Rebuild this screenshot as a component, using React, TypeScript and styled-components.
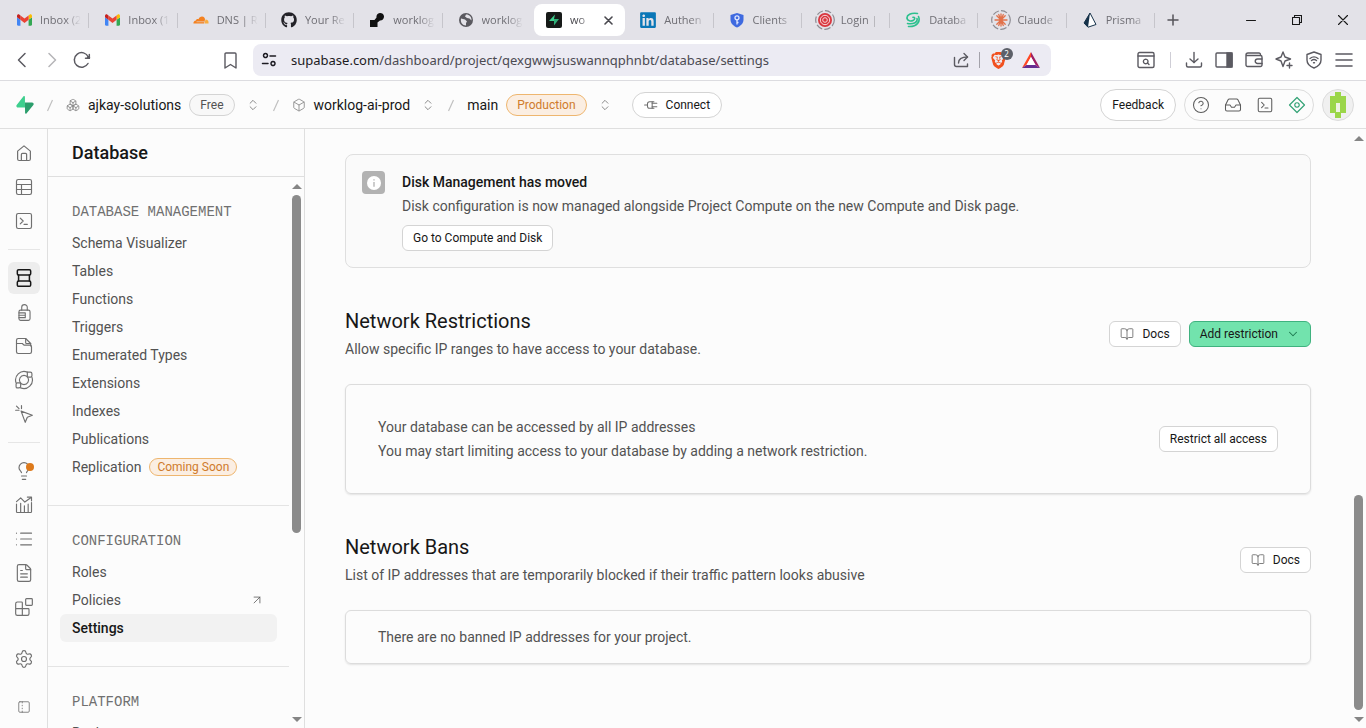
import React from "react";
import styled, { createGlobalStyle, css } from "styled-components";
import {
  ArrowUpRight,
  Blocks,
  BookOpen,
  Box,
  Boxes,
  ChevronDown,
  ChevronsUpDown,
  FileText,
  Inbox,
  Lightbulb,
  List,
  PanelLeftDashed,
  Settings,
  CircleHelp,
} from "lucide-react";
import { FaGithub, FaLinkedin } from "react-icons/fa";
import { SiBrave } from "react-icons/si";

const GlobalStyle = createGlobalStyle`
  *, *::before, *::after { box-sizing: border-box; }
  body {
    margin: 0;
    background: #fcfcfc;
    color: #171717;
    font-family: Roboto, "Liberation Sans", sans-serif;
    font-size: 14px;
    line-height: 24px;
  }
  h1, h2, h3, p, ul { margin: 0; padding: 0; }
  ul { list-style: none; }
  a { color: inherit; text-decoration: none; }
  button { font: inherit; color: inherit; padding: 0; border: 0; background: none; cursor: pointer; }
  svg { display: block; flex: none; }
`;

const Shell = styled.div`
  display: flex;
  flex-direction: column;
  height: 100vh;
  overflow: hidden;
`;

/* ---------- Browser window ---------- */

const TabStrip = styled.div`
  display: flex;
  flex: none;
  align-items: center;
  height: 40px;
  background: #e3e2e8;
  font-family: "Open Sans", sans-serif;
  font-size: 11px;
  line-height: 16px;
`;

const TabList = styled.div`
  display: flex;
  flex: 0 1 1155px;
  min-width: 0;
  padding-left: 1px;
`;

const Tab = styled.button<{ $active?: boolean; $divider?: boolean }>`
  position: relative;
  display: flex;
  flex: 1 1 0;
  min-width: 0;
  align-items: center;
  gap: 8px;
  height: 32px;
  padding: 0 6px 0 15px;
  color: #6f6e74;
  text-align: left;
  ${(p) =>
    p.$divider &&
    css`
      &::after {
        content: "";
        position: absolute;
        right: 0;
        top: 9px;
        width: 1px;
        height: 15px;
        background: #c6c5cb;
      }
    `}
  ${(p) =>
    p.$active &&
    css`
      margin-left: 3px;
      padding: 0 12px;
      border-radius: 8px;
      background: #fff;
      color: #4a494f;
    `}
`;

const TabIcon = styled.span`
  display: flex;
  flex: none;
  align-items: center;
  justify-content: center;
  width: 16px;
  height: 16px;
`;

const TabLabel = styled.span`
  flex: 1;
  min-width: 0;
  overflow: hidden;
  white-space: nowrap;
  mask-image: linear-gradient(to right, #000 calc(100% - 18px), transparent calc(100% - 2px));
`;

const NewTab = styled.button`
  display: grid;
  place-items: center;
  width: 36px;
  height: 32px;
  color: #55545a;
`;

const WindowButtons = styled.div`
  display: flex;
  margin-left: auto;
`;

const WindowButton = styled.button`
  display: grid;
  place-items: center;
  width: 46px;
  height: 40px;
`;

const Toolbar = styled.div`
  display: flex;
  flex: none;
  align-items: center;
  height: 41px;
  padding: 0 7px;
  border-bottom: 1px solid #dcdce0;
  background: #fff;
  color: #5b5a61;
`;

const ToolButton = styled.button<{ $dim?: boolean }>`
  display: grid;
  place-items: center;
  width: 30px;
  height: 30px;
  opacity: ${(p) => (p.$dim ? 0.45 : 1)};
`;

const ToolDivider = styled.span`
  width: 1px;
  height: 16px;
  margin: 0 8px 0 9px;
  background: #cfced6;
`;

const Address = styled.label`
  display: flex;
  flex: 1;
  align-items: center;
  min-width: 0;
  height: 32px;
  margin: 0 80px 0 8px;
  padding: 0 5px 0 8px;
  border-radius: 8px;
  background: #ecebf3;
  color: #1c1b22;
  font-family: "Noto Sans", sans-serif;
  font-size: 13px;
`;

const Origin = styled.span`
  margin-left: 14px;
`;

const Path = styled.input`
  flex: 1;
  min-width: 0;
  padding: 0;
  border: 0;
  outline: 0;
  background: none;
  color: #4b4a52;
  font: inherit;
`;

const History = styled.div`
  display: flex;
  width: 208px;
`;

const AddressIcons = styled.div`
  display: flex;
  align-items: center;
  gap: 3px;
  color: #5b5a61;
  ${ToolDivider} { margin: 0; background: #a3a2aa; }
`;

const Shield = styled.span`
  position: relative;
  color: #f1501f;
`;

const Count = styled.span`
  position: absolute;
  top: -4px;
  right: -6px;
  width: 12px;
  height: 12px;
  border-radius: 6px;
  background: #5d6069;
  color: #fff;
  font-size: 8px;
  line-height: 12px;
  text-align: center;
`;

/* ---------- Dashboard header ---------- */

const Header = styled.header`
  display: flex;
  flex: none;
  align-items: center;
  gap: 20px;
  height: 48px;
  padding: 0 12px 0 16px;
  border-bottom: 1px solid #dfdfdf;
`;

const Crumbs = styled.nav`
  display: flex;
  align-items: center;
`;

const Crumb = styled.a`
  display: flex;
  align-items: center;
  gap: 8px;
  white-space: nowrap;
  svg { color: #8a8a8a; }
`;

const Slash = styled.svg`
  width: 16px;
  height: 16px;
  margin: 0 8px;
  color: #c0c0c0;
`;

const Switcher = styled.button`
  display: grid;
  place-items: center;
  width: 14px;
  height: 24px;
  margin-left: 11px;
  color: #7a7a7a;
`;

const Pill = styled.span<{ $tone?: "warning"; $small?: boolean }>`
  padding: 0 ${(p) => (p.$small ? 7 : 10)}px;
  border: 1px solid ${(p) => (p.$tone ? "#eeb66f" : "#d4d4d4")};
  border-radius: 11px;
  background: ${(p) => (p.$tone ? "#fbeee2" : "#f8f8f8")};
  color: ${(p) => (p.$tone ? "#cf7b2c" : "#525252")};
  font-size: 12px;
  line-height: ${(p) => (p.$small ? 16 : 20)}px;
`;

const Button = styled.button<{ $tone?: "primary"; $round?: boolean; $tall?: boolean }>`
  display: inline-flex;
  flex: none;
  align-items: center;
  gap: 8px;
  height: ${(p) => (p.$tall ? 32 : 26)}px;
  padding: 0 ${(p) => (p.$round ? 11 : 10)}px;
  border: 1px solid ${(p) => (p.$tone ? "#3fb27f" : "#d4d4d4")};
  border-radius: ${(p) => (p.$round ? 16 : 6)}px;
  background: ${(p) => (p.$tone ? "#72e3ad" : "#fff")};
  color: #171717;
  font-size: 12px;
  line-height: 16px;
  white-space: nowrap;
  svg { color: ${(p) => (p.$tone ? "#1d7a50" : "#6f6f6f")}; }
`;

const HeaderActions = styled.div`
  display: flex;
  gap: 8px;
  margin-left: auto;
`;

const IconGroup = styled.div`
  display: flex;
  align-items: center;
  height: 32px;
  border: 1px solid #dcdcdc;
  border-radius: 16px;
`;

const IconButton = styled.button<{ $green?: boolean }>`
  display: grid;
  place-items: center;
  width: 32px;
  height: 30px;
  color: ${(p) => (p.$green ? "#35a377" : "#5c5c5c")};
`;

const Avatar = styled.button`
  display: grid;
  place-items: center;
  width: 32px;
  height: 32px;
  border: 1px solid #dcdcdc;
  border-radius: 16px;
  background: #f0f0f0;
`;

/* ---------- Body ---------- */

const Body = styled.div`
  display: flex;
  flex: 1;
  min-height: 0;
`;

const Rail = styled.nav`
  display: flex;
  flex: none;
  flex-direction: column;
  width: 48px;
  padding: 8px 7px 5px 8px;
  border-right: 1px solid #dfdfdf;
`;

const RailGroup = styled.div`
  display: flex;
  flex-direction: column;
  gap: 2px;
  & + & {
    margin-top: 12px;
    padding-top: 12px;
    border-top: 1px solid #e6e6e6;
  }
`;

const RailLink = styled.a<{ $active?: boolean }>`
  position: relative;
  display: grid;
  place-items: center;
  width: 32px;
  height: 32px;
  border-radius: 6px;
  background: ${(p) => (p.$active ? "#ededed" : "none")};
  color: ${(p) => (p.$active ? "#171717" : "#707070")};
`;

const RailFoot = styled.div`
  display: flex;
  flex-direction: column;
  gap: 16px;
  margin-top: 20px;
`;

const Dot = styled.span`
  position: absolute;
  top: 8px;
  right: 6px;
  width: 8px;
  height: 8px;
  border-radius: 4px;
  background: #dd7a1c;
`;

const Sidebar = styled.aside`
  display: flex;
  flex: none;
  flex-direction: column;
  width: 257px;
  border-right: 1px solid #dfdfdf;
`;

const SidebarTitle = styled.h1`
  flex: none;
  height: 48px;
  padding-left: 24px;
  border-bottom: 1px solid #dfdfdf;
  font-size: 18px;
  font-weight: 500;
  line-height: 48px;
`;

const SidebarScroll = styled.div`
  display: flex;
  flex: 1;
  min-height: 0;
`;

const SidebarNav = styled.nav`
  flex: 1;
  min-width: 0;
  overflow: hidden;
`;

const NavGroup = styled.section`
  padding: 25px 12px 24px;
  border-bottom: 1px solid #e4e4e4;
`;

const NavHeading = styled.h2`
  margin-bottom: 7px;
  padding-left: 12px;
  color: #707070;
  font-family: "Liberation Mono", monospace;
  font-size: 14px;
  font-weight: 400;
  line-height: 20px;
  text-transform: uppercase;
`;

const NavLink = styled.a<{ $active?: boolean }>`
  display: flex;
  align-items: center;
  gap: 8px;
  height: 28px;
  padding: 0 13px 0 12px;
  border-radius: 6px;
  background: ${(p) => (p.$active ? "#f2f2f2" : "none")};
  color: ${(p) => (p.$active ? "#171717" : "#525252")};
  font-weight: ${(p) => (p.$active ? 500 : 400)};
  svg { margin-left: auto; }
`;

const Scrollbar = styled.div`
  display: flex;
  flex: none;
  flex-direction: column;
  align-items: center;
  width: 15px;
`;

const ScrollArrow = styled.span<{ $down?: boolean }>`
  display: grid;
  place-items: center;
  height: 18px;
  &::before {
    content: "";
    border: 5px solid transparent;
    border-${(p) => (p.$down ? "top" : "bottom")}-color: #858585;
    border-${(p) => (p.$down ? "bottom" : "top")}-width: 0;
  }
`;

const ScrollSpace = styled.span<{ $share: number }>`
  flex: ${(p) => p.$share} 1 0;
`;

const ScrollThumb = styled.span<{ $share: number }>`
  flex: ${(p) => p.$share} 1 0;
  width: 9px;
  border-radius: 5px;
  background: #8b8b8b;
`;

const Main = styled.main`
  flex: 1;
  min-width: 0;
  padding: 25px 40px;
  overflow: hidden;
`;

const Notice = styled.section`
  display: flex;
  gap: 17px;
  padding: 16px;
  border: 1px solid #dfdfdf;
  border-radius: 8px;
  background: #fafafa;
`;

const NoticeIcon = styled.span`
  display: grid;
  place-items: center;
  flex: none;
  width: 23px;
  height: 23px;
  border-radius: 4px;
  background: #b2b2b2;
`;

const NoticeTitle = styled.h3`
  font-size: 14px;
  font-weight: 500;
  line-height: 23px;
`;

const Text = styled.p`
  color: #525252;
`;

const NoticeBody = styled.div`
  ${Button} { margin-top: 7px; }
`;

const Section = styled.section`
  margin-top: 40px;
`;

const SectionHead = styled.div`
  display: flex;
  align-items: center;
  gap: 8px;
  margin-bottom: 24px;
`;

const SectionIntro = styled.div`
  display: flex;
  flex: 1;
  flex-direction: column;
  gap: 4px;
  ${Text} { line-height: 22px; }
`;

const SectionTitle = styled.h2`
  font-size: 20px;
  font-weight: 400;
  line-height: 26px;
`;

const Card = styled.div<{ $roomy?: boolean }>`
  display: flex;
  align-items: center;
  justify-content: space-between;
  padding: ${(p) => (p.$roomy ? 30 : 14)}px 32px;
  border: 1px solid #dcdcdc;
  border-radius: 6px;
  box-shadow: 0 1px 2px rgba(0, 0, 0, 0.1);
`;

/* ---------- Drawings ---------- */

type LineProps = { d: string[]; size?: number; width?: number; box?: number };

const Line = ({ d, size = 18, width = 1.4, box = 24 }: LineProps) => (
  <svg
    width={size}
    height={size}
    viewBox={`0 0 ${box} ${box}`}
    fill="none"
    stroke="currentColor"
    strokeWidth={width}
    strokeLinecap="round"
    strokeLinejoin="round"
    aria-hidden
  >
    {d.map((path) => (
      <path key={path} d={path} />
    ))}
  </svg>
);

const icons = {
  home: ["M3.5 9.5 L12 2.5 L20.5 9.5 V20 a2 2 0 0 1-2 2 H5.500 a2 2 0 0 1-2-2 Z", "M8.500 22 V14 a1.500 1.500 0 0 1 1.500-1.500 H14 A1.500 1.500 0 0 1 15.500 14 V22"],
  table: ["M3 5 a2 2 0 0 1 2-2 H19 a2 2 0 0 1 2 2 V19 a2 2 0 0 1-2 2 H5 a2 2 0 0 1-2-2 Z", "M3 9 H21", "M3 15 H21", "M9 9 V21"],
  sql: ["M3 5 a2 2 0 0 1 2-2 H19 a2 2 0 0 1 2 2 V19 a2 2 0 0 1-2 2 H5 a2 2 0 0 1-2-2 Z", "M7.500 8.500 L11 12 L7.500 15.500", "M12 16 H16"],
  database: ["M4 3.500 a1.500 1.500 0 0 1 1.500-1.500 H18.500 A1.500 1.500 0 0 1 20 3.500 V7 A1.500 1.500 0 0 1 18.500 8.500 H5.500 A1.500 1.500 0 0 1 4 7 Z", "M5.500 8.500 V15.500 M18.500 8.500 V15.500", "M4 17 a1.500 1.500 0 0 1 1.500-1.500 H18.500 A1.500 1.500 0 0 1 20 17 V20.500 A1.500 1.500 0 0 1 18.500 22 H5.500 A1.500 1.500 0 0 1 4 20.500 Z"],
  auth: ["M5 11 a2 2 0 0 1 2-2 H17 a2 2 0 0 1 2 2 V20 a2 2 0 0 1-2 2 H7 a2 2 0 0 1-2-2 Z", "M8.500 9 V5.500 a3.500 3.500 0 0 1 7 0 V9", "M5 12.500 H13 M5 15.500 H13 M5 18.500 H13 V12.500"],
  storage: ["M3 9 V5 a2 2 0 0 1 2-2 H14 L20 9 V12", "M14 3 V8 a1 1 0 0 0 1 1 H20", "M3 9 V19 a2 2 0 0 0 2 2 H19 a2 2 0 0 0 2-2 V13 a2 2 0 0 0-2-2 H12 L10 9 Z"],
  functions: ["M16 2.500 A10.300 10.300 0 0 0 2.500 15.500 M21.500 8.500 A10.300 10.300 0 0 1 8 21.500", "M12 6.500 a5.500 5.500 0 1 0 0.010 0 Z", "M16 2.500 H19.500 a2 2 0 0 1 2 2 V7 A1.500 1.500 0 0 1 20 8.500 H17.500 A1.500 1.500 0 0 1 16 7 Z", "M2.500 17 A1.500 1.500 0 0 1 4 15.500 H6.500 A1.500 1.500 0 0 1 8 17 V19.500 A2 2 0 0 1 6 21.500 H4 A1.500 1.500 0 0 1 2.500 20 Z"],
  realtime: ["M8.500 8.500 L22 13.500 L16 16 L13.500 22 Z", "M9 2 V5.500", "M2 7.500 H6", "M3 2.500 L6 5.500"],
  reports: ["M3 11 V20 a1 1 0 0 0 1 1 H20 a1 1 0 0 0 1-1 V9", "M3 8 L8 3.500 L13 8.500 L20.500 3", "M16 2.500 H21 V7", "M8 10 V21 M12.500 13 V21 M17 11 V21"],
  plug: ["M1 12 H6", "M14 6.500 H9.500 A3.500 3.500 0 0 0 6 10 V14 A3.500 3.500 0 0 0 9.500 17.500 H14 Z", "M14 9 H22 M14 15 H22 M14 6.500 H17 M14 17.500 H17"],
  diamond: ["M12 2 L22 12 L12 22 L2 12 Z", "M12 9 a3 3 0 1 0 0.010 0 Z"],
};

const Bolt = ({ size }: { size: number }) => (
  <svg width={size} height={size} viewBox="0 0 109 113" aria-hidden>
    <path fill="#2b9e6c" d="M63.700 110.300c-2.900 3.600-8.700 1.600-8.700-3L54 40.100h45.200c8.200 0 12.800 9.400 7.700 15.800L63.700 110.300Z" />
    <path fill="#3ecf8e" d="M45.300 2.100c2.900-3.600 8.700-1.700 8.700 2.900l.5 67.300H9.800c-8.200 0-12.700-9.500-7.600-15.900L45.300 2.100Z" />
  </svg>
);

const Gmail = () => (
  <svg width="15" height="12" viewBox="52 42 88 66" aria-hidden>
    <path fill="#4285f4" d="M58 108h14V74L52 59v43c0 3.320 2.690 6 6 6" />
    <path fill="#34a853" d="M120 108h14c3.320 0 6-2.690 6-6V59l-20 15" />
    <path fill="#fbbc04" d="M120 48v26l20-15v-8c0-7.420-8.470-11.650-14.400-7.200" />
    <path fill="#ea4335" d="M72 74V48l24 18 24-18v26L96 92" />
    <path fill="#c5221f" d="M52 51v8l20 15V48l-5.600-4.200c-5.940-4.450-14.400-.22-14.400 7.200" />
  </svg>
);

const Cloudflare = () => (
  <svg width="16" height="8" viewBox="0 0 32 16" aria-hidden>
    <path fill="#f48120" d="M1 15 a5 5 0 0 1 5-6 C6 6 9 5 11 6.500 C12 2.500 15 1 18 1 C22 1 24 4 24 7 L22 15 Z" />
    <path fill="#faad3f" d="M23 15 L25 7 C29 7 32 10 31 15 Z" />
    <path stroke="#e3e2e8" strokeWidth="1.200" d="M7 11.500 H22" />
  </svg>
);

const NodeLogo = () => (
  <svg width="16" height="16" viewBox="0 0 16 16" aria-hidden>
    <path d="M1 8 H5.500 L7.500 5.500 A3.800 3.800 0 1 1 11 8.500 L8.500 10.500 V15 H1 Z" fill="#111" />
  </svg>
);

const Globe = () => (
  <svg width="16" height="16" viewBox="0 0 16 16" aria-hidden>
    <circle cx="8" cy="8" r="7" fill="#5a595f" />
    <path fill="#e3e2e8" d="M3 6.500 L7 7.500 L9 9.500 L8 11 V13.500 C4.500 13.500 2.200 10.500 3 6.500 Z M8 2.500 L7 4.500 L9 6 L11.500 6.500 L13.500 8.500 C13.800 5 11.500 2.500 8 2.500 Z" />
  </svg>
);

const BoltTile = () => (
  <svg width="16" height="16" viewBox="0 0 16 16" aria-hidden>
    <rect width="16" height="16" rx="2" fill="#161a18" />
    <path d="M9 2.500 L3 9 H8 V7 Z" fill="#3ecf8e" />
    <path d="M8 13.500 L13 7 H8 Z" fill="#2fae78" />
  </svg>
);

const KeyShield = () => (
  <svg width="14" height="16" viewBox="0 0 14 16" aria-hidden>
    <path d="M7 1 L13.500 3 V7.500 C13.500 11.500 10.500 14 7 15.500 C3.500 14 .5 11.500 .5 7.500 V3 Z" fill="#3f6ae0" />
    <circle cx="7" cy="5.800" r="2" fill="none" stroke="#dfe7ff" strokeWidth="1.300" />
    <path d="M7 8 V12.500 M7 10.500 H8.500" stroke="#dfe7ff" strokeWidth="1.300" />
  </svg>
);

const Ring = ({ children }: { children: React.ReactNode }) => (
  <svg width="20" height="20" viewBox="0 0 20 20" fill="none" aria-hidden>
    <circle cx="10" cy="10" r="9.300" stroke="#8d8c92" strokeWidth="1.200" strokeDasharray="6.500 2.200" />
    {children}
  </svg>
);

const Target = () => (
  <Ring>
    <circle cx="10" cy="10" r="7" fill="#d9363e" />
    <circle cx="10" cy="10" r="4.700" stroke="#f7d6d8" />
    <circle cx="10" cy="10" r="2.300" stroke="#f7d6d8" />
  </Ring>
);

const Claude = () => (
  <Ring>
    <path
      stroke="#e2714a"
      strokeWidth="1.300"
      strokeLinecap="round"
      d="M10 4 V16 M4 10 H16 M5.800 5.800 L14.200 14.200 M14.200 5.800 L5.800 14.200 M7.700 4.500 L12.300 15.500 M12.300 4.500 L7.700 15.500"
    />
  </Ring>
);

const Swirl = () => (
  <svg width="16" height="16" viewBox="0 0 16 16" fill="none" stroke="#2cc08e" strokeWidth="1.600" strokeLinecap="round" aria-hidden>
    <path d="M12.500 1.500 C6 .5 1.500 3 2 6.500 C2.500 9 6 9.500 8 8.500 C10.500 7.300 10 5 8 5.300" />
    <path d="M13.500 4.500 C15.500 9 12.500 15 3.500 14.500 M12 6.500 C13 10 9 12.500 2.500 11.500" />
  </svg>
);

const Prisma = () => (
  <svg width="14" height="16" viewBox="0 0 14 16" aria-hidden>
    <path d="M7 1 L13 12.500 L5 15.200 L1 11 Z" fill="#fff" stroke="#16324a" strokeWidth="1" />
    <path d="M7 1 L5 15.200 L1 11 Z" fill="#16324a" />
  </svg>
);

const Bat = () => (
  <svg width="18" height="16" viewBox="0 0 18 16" aria-hidden>
    <path fill="#ff4724" d="M9 0 L0 16 L4.500 13 L9 5 Z" />
    <path fill="#662d91" d="M0 16 H18 L13.500 13 H4.500 Z" />
    <path fill="#9e1f63" d="M9 0 L18 16 L13.500 13 L9 5 Z" />
    <path fill="#fff" d="M9 5 L13.500 13 H4.500 Z" />
  </svg>
);

const PixelAvatar = () => (
  <svg width="16" height="28" viewBox="0 0 16 28" aria-hidden>
    <path fill="#9bd649" d="M5 1 H11 V5 H16 V22 H11 V27 H5 V22 H0 V5 H5 Z" />
    <path fill="#eef3e4" d="M6 12 H10 V21 H6 Z" />
  </svg>
);

const Info = () => (
  <svg width="14" height="14" viewBox="0 0 14 14" aria-hidden>
    <circle cx="7" cy="7" r="7" fill="#fff" />
    <path d="M7 3.200 V4.500 M7 6 V10.800" stroke="#b2b2b2" strokeWidth="1.300" />
  </svg>
);

/* ---------- Content ---------- */

const tabs = [
  { label: "Inbox (2", icon: <Gmail />, divider: true },
  { label: "Inbox (1", icon: <Gmail />, divider: true },
  { label: "DNS | R", icon: <Cloudflare />, divider: true },
  { label: "Your Re", icon: <FaGithub size={16} color="#232228" />, divider: true },
  { label: "worklog", icon: <NodeLogo />, divider: true },
  { label: "worklog", icon: <Globe /> },
  { label: "wo", icon: <BoltTile />, active: true },
  { label: "Authen", icon: <FaLinkedin size={18} color="#0a77b7" />, divider: true },
  { label: "Clients", icon: <KeyShield />, divider: true },
  { label: "Login |", icon: <Target />, divider: true },
  { label: "Databa", icon: <Swirl />, divider: true },
  { label: "Claude", icon: <Claude />, divider: true },
  { label: "Prisma", icon: <Prisma />, divider: true },
];

type Entry = { label: string; badge?: string; external?: boolean; active?: boolean };

const groups: { heading: string; items: Entry[] }[] = [
  {
    heading: "Database Management",
    items: [
      { label: "Schema Visualizer" },
      { label: "Tables" },
      { label: "Functions" },
      { label: "Triggers" },
      { label: "Enumerated Types" },
      { label: "Extensions" },
      { label: "Indexes" },
      { label: "Publications" },
      { label: "Replication", badge: "Coming Soon" },
    ],
  },
  {
    heading: "Configuration",
    items: [{ label: "Roles" }, { label: "Policies", external: true }, { label: "Settings", active: true }],
  },
  { heading: "Platform", items: [{ label: "Backups" }] },
];

type RailEntry = { label: string; icon: React.ReactNode; active?: boolean; dot?: boolean };

const railGroups: RailEntry[][] = [
  [
    { label: "Project overview", icon: <Line d={icons.home} width={1.6} /> },
    { label: "Table Editor", icon: <Line d={icons.table} size={20} /> },
    { label: "SQL Editor", icon: <Line d={icons.sql} size={20} /> },
  ],
  [
    { label: "Database", icon: <Line d={icons.database} width={1.8} size={20} />, active: true },
    { label: "Authentication", icon: <Line d={icons.auth} size={19} /> },
    { label: "Storage", icon: <Line d={icons.storage} size={20} /> },
    { label: "Edge Functions", icon: <Line d={icons.functions} size={20} /> },
    { label: "Realtime", icon: <Line d={icons.realtime} size={20} /> },
  ],
  [
    { label: "Advisors", icon: <Lightbulb size={20} strokeWidth={1.4} />, dot: true },
    { label: "Reports", icon: <Line d={icons.reports} size={20} /> },
    { label: "Logs", icon: <List size={20} strokeWidth={1.4} /> },
    { label: "API Docs", icon: <FileText size={20} strokeWidth={1.4} /> },
    { label: "Integrations", icon: <Blocks size={20} strokeWidth={1.4} /> },
  ],
];

const Browser = () => (
  <>
    <TabStrip>
      <TabList role="tablist" aria-label="Open tabs">
        {tabs.map((tab, i) => (
          <Tab key={i} role="tab" aria-selected={!!tab.active} $active={tab.active} $divider={tab.divider}>
            <TabIcon>{tab.icon}</TabIcon>
            <TabLabel>{tab.label}</TabLabel>
            {tab.active && <Line d={["M1 1 L8 8 M8 1 L1 8"]} size={9} box={9} width={1.6} />}
          </Tab>
        ))}
      </TabList>
      <NewTab aria-label="New tab">
        <Line d={["M6 1 V11 M1 6 H11"]} size={12} box={12} width={1.5} />
      </NewTab>
      <WindowButtons>
        <WindowButton aria-label="Minimize">
          <Line d={["M.5 5.500 H9.500"]} size={10} box={10} width={1} />
        </WindowButton>
        <WindowButton aria-label="Restore">
          <Line d={["M.5 2.500 H7.500 V9.500 H.5 Z", "M2.500 2.500 V.5 H9.500 V7.500 H7.500"]} size={10} box={10} width={1.1} />
        </WindowButton>
        <WindowButton aria-label="Close">
          <Line d={["M.5 .5 L9.500 9.500 M9.500 .5 L.5 9.500"]} size={10} box={10} width={1.1} />
        </WindowButton>
      </WindowButtons>
    </TabStrip>
    <Toolbar>
      <History>
        <ToolButton aria-label="Back"><Line d={["M11 1.500 L4.500 8 L11 14.500"]} size={16} box={16} width={1.5} /></ToolButton>
        <ToolButton aria-label="Forward" $dim><Line d={["M5 1.500 L11.500 8 L5 14.500"]} size={16} box={16} width={1.5} /></ToolButton>
        <ToolButton aria-label="Reload">
          <svg width="18" height="18" viewBox="0 0 18 18" fill="none" stroke="currentColor" strokeWidth="1.500" strokeLinecap="round">
            <path d="M15 12.500 A7.300 7.300 0 1 1 15.300 6" />
            <circle cx="15.500" cy="6.500" r="1.600" fill="currentColor" stroke="none" />
            <path d="M12.500 7.300 H16.300 V3.500" />
          </svg>
        </ToolButton>
      </History>
      <ToolButton aria-label="Bookmark">
        <Line d={["M3 2 a1 1 0 0 1 1-1 H13 a1 1 0 0 1 1 1 V16 L8.500 12.500 L3 16 Z"]} size={17} box={17} width={1.4} />
      </ToolButton>
      <Address>
        <Line d={["M6.500 3.500 A2 2 0 1 1 6.500 3.490", "M9 4 H14.500", "M1.500 11.500 H7", "M14 11.500 A2 2 0 1 1 14 11.490"]} size={16} box={16} width={1.5} />
        <Origin>supabase.com</Origin>
        <Path aria-label="Address" defaultValue="/dashboard/project/qexgwwjsuswannqphnbt/database/settings" />
        <AddressIcons>
          <ToolButton aria-label="Share">
            <Line d={["M1.500 5.500 V12.500 a2 2 0 0 0 2 2 H14.500 V12", "M5.500 11 C5.500 7 8 5 14.500 5", "M11 1.500 L14.500 5 L11 8.500"]} size={16} box={16} width={1.4} />
          </ToolButton>
          <ToolDivider />
          <ToolButton aria-label="Shields">
            <Shield><SiBrave size={17} /><Count>2</Count></Shield>
          </ToolButton>
          <ToolButton aria-label="Rewards"><Bat /></ToolButton>
        </AddressIcons>
      </Address>
      <ToolButton aria-label="Search tabs">
        <Line d={["M1 3 a1.500 1.500 0 0 1 1.500-1.500 H15.500 A1.500 1.500 0 0 1 17 3 V15 a1.500 1.500 0 0 1-1.500 1.500 H2.500 A1.500 1.500 0 0 1 1 15 Z", "M1 5 H17", "M11 10.500 A2.300 2.300 0 1 1 11 10.490", "M10.500 12 L12 13.500"]} size={18} box={18} width={1.4} />
      </ToolButton>
      <ToolDivider />
      <ToolButton aria-label="Downloads">
        <Line d={["M9 1.500 V11.500", "M5 8 L9 11.500 L13 8", "M1.500 12 V14.500 a1.500 1.500 0 0 0 1.500 1.500 H15 a1.500 1.500 0 0 0 1.500-1.500 V12"]} size={18} box={18} width={1.4} />
      </ToolButton>
      <ToolButton aria-label="Side panel">
        <svg width="18" height="16" viewBox="0 0 18 16" fill="none" stroke="currentColor" strokeWidth="1.400">
          <rect x="1" y="1" width="16" height="14" rx="1" />
          <rect x="12" y="1" width="5" height="14" fill="currentColor" />
        </svg>
      </ToolButton>
      <ToolButton aria-label="Wallet">
        <Line d={["M1 4.500 H15.500 A1.500 1.500 0 0 1 17 6 V14 a1.500 1.500 0 0 1-1.500 1.500 H2.500 A1.500 1.500 0 0 1 1 14 V4 a2 2 0 0 1 2-2 H14 a1.500 1.500 0 0 1 1.500 1.500", "M17 8 H12.500 a2.200 2.200 0 0 0 0 4.500 H17"]} size={18} box={18} width={1.4} />
      </ToolButton>
      <ToolButton aria-label="Assistant">
        <Line d={["M8 1 L10 6 L15.500 8 L10 10 L8 15.500 L6 10 L1 8 L6 6 Z", "M14.500 12 V17 M12 14.500 H17"]} size={18} box={18} width={1.4} />
      </ToolButton>
      <ToolButton aria-label="VPN">
        <Line d={["M9 1 L16 3.500 V9 C16 13 13 15.500 9 17 C5 15.500 2 13 2 9 V3.500 Z", "M5 7.500 C7.500 5.500 10.500 5.500 13 7.500", "M6.500 9.500 C8 8.300 10 8.300 11.500 9.500", "M8.500 11.800 H9.500"]} size={18} box={18} width={1.4} />
      </ToolButton>
      <ToolButton aria-label="Menu">
        <Line d={["M1 3 H17 M1 9 H17 M1 15 H17"]} size={18} box={18} width={1.6} />
      </ToolButton>
    </Toolbar>
  </>
);

const Separator = () => (
  <Slash viewBox="0 0 16 16" aria-hidden>
    <path d="M10.500 3 L5.500 14" stroke="currentColor" strokeWidth="1.200" />
  </Slash>
);

const Switch = ({ label }: { label: string }) => (
  <Switcher aria-label={label}>
    <ChevronsUpDown size={14} strokeWidth={1.5} />
  </Switcher>
);

const DocsButton = () => (
  <Button>
    <BookOpen size={14} strokeWidth={1.5} />
    Docs
  </Button>
);

const Bars = ({ before, thumb, after }: { before: number; thumb: number; after: number }) => (
  <Scrollbar aria-hidden>
    <ScrollArrow />
    <ScrollSpace $share={before} />
    <ScrollThumb $share={thumb} />
    <ScrollSpace $share={after} />
    <ScrollArrow $down />
  </Scrollbar>
);

export default function App() {
  return (
    <Shell>
      <GlobalStyle />
      <Browser />
      <Header>
        <Crumbs aria-label="Breadcrumb">
          <a href="#home" aria-label="Supabase"><Bolt size={18} /></a>
          <Separator />
          <Crumb href="#org"><Boxes size={14} strokeWidth={1.5} />ajkay-solutions<Pill>Free</Pill></Crumb>
          <Switch label="Switch organization" />
          <Separator />
          <Crumb href="#project"><Box size={14} strokeWidth={1.5} />worklog-ai-prod</Crumb>
          <Switch label="Switch project" />
          <Separator />
          <Crumb href="#branch">main<Pill $tone="warning">Production</Pill></Crumb>
          <Switch label="Switch branch" />
        </Crumbs>
        <Button $round><Line d={icons.plug} size={14} width={1.8} />Connect</Button>
        <HeaderActions>
          <Button $round $tall>Feedback</Button>
          <IconGroup>
            <IconButton aria-label="Help"><CircleHelp size={18} strokeWidth={1.4} /></IconButton>
            <IconButton aria-label="Inbox"><Inbox size={18} strokeWidth={1.4} /></IconButton>
            <IconButton aria-label="SQL Editor"><Line d={icons.sql} /></IconButton>
            <IconButton aria-label="Assistant" $green><Line d={icons.diamond} width={1.6} /></IconButton>
          </IconGroup>
          <Avatar aria-label="Account"><PixelAvatar /></Avatar>
        </HeaderActions>
      </Header>
      <Body>
        <Rail aria-label="Project">
          {railGroups.map((group, i) => (
            <RailGroup key={i}>
              {group.map((item) => (
                <RailLink key={item.label} href="#section" aria-label={item.label} $active={item.active}>
                  {item.icon}
                  {item.dot && <Dot />}
                </RailLink>
              ))}
            </RailGroup>
          ))}
          <RailFoot>
            <RailLink href="#settings" aria-label="Project Settings"><Settings size={20} strokeWidth={1.4} /></RailLink>
            <RailLink as="button" aria-label="Toggle sidebar"><PanelLeftDashed size={14} strokeWidth={1.4} /></RailLink>
          </RailFoot>
        </Rail>
        <Sidebar>
          <SidebarTitle>Database</SidebarTitle>
          <SidebarScroll>
            <SidebarNav aria-label="Database">
              {groups.map((group) => (
                <NavGroup key={group.heading}>
                  <NavHeading>{group.heading}</NavHeading>
                  <ul>
                    {group.items.map((item) => (
                      <li key={item.label}>
                        <NavLink href="#page" $active={item.active}>
                          {item.label}
                          {item.badge && <Pill $tone="warning" $small>{item.badge}</Pill>}
                          {item.external && <ArrowUpRight size={14} strokeWidth={1.3} />}
                        </NavLink>
                      </li>
                    ))}
                  </ul>
                </NavGroup>
              ))}
            </SidebarNav>
            <Bars before={0} thumb={338} after={177} />
          </SidebarScroll>
        </Sidebar>
        <Main>
          <Notice>
            <NoticeIcon><Info /></NoticeIcon>
            <NoticeBody>
              <NoticeTitle>Disk Management has moved</NoticeTitle>
              <Text>Disk configuration is now managed alongside Project Compute on the new Compute and Disk page.</Text>
              <Button>Go to Compute and Disk</Button>
            </NoticeBody>
          </Notice>
          <Section>
            <SectionHead>
              <SectionIntro>
                <SectionTitle>Network Restrictions</SectionTitle>
                <Text>Allow specific IP ranges to have access to your database.</Text>
              </SectionIntro>
              <DocsButton />
              <Button $tone="primary">Add restriction<ChevronDown size={14} strokeWidth={1.8} /></Button>
            </SectionHead>
            <Card $roomy>
              <div>
                <Text>Your database can be accessed by all IP addresses</Text>
                <Text>You may start limiting access to your database by adding a network restriction.</Text>
              </div>
              <Button>Restrict all access</Button>
            </Card>
          </Section>
          <Section>
            <SectionHead>
              <SectionIntro>
                <SectionTitle>Network Bans</SectionTitle>
                <Text>List of IP addresses that are temporarily blocked if their traffic pattern looks abusive</Text>
              </SectionIntro>
              <DocsButton />
            </SectionHead>
            <Card>
              <Text>There are no banned IP addresses for your project.</Text>
            </Card>
          </Section>
        </Main>
        <Bars before={348} thumb={215} after={0} />
      </Body>
    </Shell>
  );
}
